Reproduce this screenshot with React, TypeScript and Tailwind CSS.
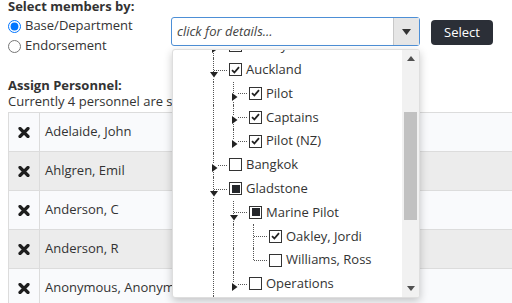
import React from 'react';

type Check = 'on' | 'off' | 'part';

interface TreeRow {
  label: string;
  guides: boolean[];
  last: boolean;
  toggle: 'open' | 'closed' | null;
  check: Check;
}

const treeRows: TreeRow[] = [
  { label: 'Albany', guides: [], last: false, toggle: 'closed', check: 'off' },
  { label: 'Auckland', guides: [], last: false, toggle: 'open', check: 'on' },
  { label: 'Pilot', guides: [true], last: false, toggle: 'closed', check: 'on' },
  { label: 'Captains', guides: [true], last: false, toggle: 'closed', check: 'on' },
  { label: 'Pilot (NZ)', guides: [true], last: true, toggle: 'closed', check: 'on' },
  { label: 'Bangkok', guides: [], last: false, toggle: 'closed', check: 'off' },
  { label: 'Gladstone', guides: [], last: false, toggle: 'open', check: 'part' },
  { label: 'Marine Pilot', guides: [true], last: false, toggle: 'open', check: 'part' },
  { label: 'Oakley, Jordi', guides: [true, true], last: false, toggle: null, check: 'on' },
  { label: 'Williams, Ross', guides: [true, true], last: true, toggle: null, check: 'off' },
  { label: 'Operations', guides: [true], last: true, toggle: 'closed', check: 'off' },
  { label: 'Rockhampton', guides: [], last: false, toggle: 'closed', check: 'off' },
];

const personnel = ['Adelaide, John', 'Ahlgren, Emil', 'Anderson, C', 'Anderson, R', 'Anonymous, Anonymous'];

const CheckBox = ({ state }: { state: Check }) => (
  <div className="ml-[5px] flex h-[13px] w-[13px] shrink-0 items-center justify-center border border-[#333] bg-white">
    {state === 'on' && (
      <svg width="9" height="8" viewBox="0 0 9 8">
        <path d="M1 4.2 L3.4 6.5 L8 1.2" fill="none" stroke="#222" strokeWidth="1.8" />
      </svg>
    )}
    {state === 'part' && <div className="h-[8px] w-[8px] bg-[#25272b]" />}
  </div>
);

const Arrow = ({ open }: { open: boolean }) =>
  open ? (
    <svg width="8" height="6" viewBox="0 0 8 6" className="absolute left-[6px] top-[14px] bg-white">
      <path d="M0 0 L8 0 L4 5.5 Z" fill="#222" />
    </svg>
  ) : (
    <svg width="6" height="8" viewBox="0 0 6 8" className="absolute left-[8px] top-[11px] bg-white">
      <path d="M0 0 L5.5 4 L0 8 Z" fill="#222" />
    </svg>
  );

const RemoveIcon = () => (
  <svg width="12" height="11" viewBox="0 0 12 11">
    <path d="M2 1.5 L10 9.5 M10 1.5 L2 9.5" stroke="#1e1e1e" strokeWidth="3.2" strokeLinecap="round" />
  </svg>
);

const Row = ({ row }: { row: TreeRow }) => (
  <div className="flex h-[23.8px] items-center">
    {row.guides.map((g, i) => (
      <div key={i} className="relative w-5 self-stretch">
        {g && <div className="absolute bottom-0 left-[9px] top-0 border-l border-dotted border-[#555]" />}
      </div>
    ))}
    <div className="relative w-5 self-stretch">
      <div
        className={
          row.last
            ? 'absolute left-[9px] top-0 h-1/2 border-l border-dotted border-[#555]'
            : 'absolute bottom-0 left-[9px] top-0 border-l border-dotted border-[#555]'
        }
      />
      <div className="absolute left-[10px] top-1/2 w-[13px] border-t border-dotted border-[#555]" />
      {row.toggle && <Arrow open={row.toggle === 'open'} />}
    </div>
    <CheckBox state={row.check} />
    <span className="ml-1 whitespace-nowrap text-[13px] text-[#333]">{row.label}</span>
  </div>
);

export default function App() {
  return (
    <div className="relative h-[303px] w-[512px] overflow-hidden bg-white font-['Open_Sans',sans-serif] text-[13px] text-[#333]">
      <div className="flex pl-2">
        {/* member selection mode */}
        <div className="w-[163px]">
          <div className="h-3 font-bold leading-[12px]">Select members by:</div>
          <div className="mt-1">
            <label className="flex h-5 items-center gap-1">
              <input type="radio" name="mode" defaultChecked className="h-[13px] w-[13px]" />
              <span>Base/Department</span>
            </label>
            <label className="flex h-5 items-center gap-1">
              <input type="radio" name="mode" className="h-[13px] w-[13px]" />
              <span>Endorsement</span>
            </label>
          </div>
        </div>

        {/* combo + button */}
        <div className="mt-[17px] flex h-[29px] w-[249px] rounded-[3px] border border-[#4d8fd6] bg-white">
          <div className="flex flex-1 items-center pl-[5px] italic text-[#444]">click for details...</div>
          <div className="flex w-[26px] items-center justify-center border-l border-[#c8c8c8] bg-[#e6e6e6]">
            <svg width="9" height="6" viewBox="0 0 9 6">
              <path d="M0 0 L9 0 L4.5 6 Z" fill="#333" />
            </svg>
          </div>
        </div>
        <button className="ml-[11px] mt-[20px] flex h-[25px] w-[62px] items-center justify-center rounded-[4px] bg-[#2b2f37] text-white">
          Select
        </button>
      </div>

      <div className="pl-2">
        <div className="mt-[21px] font-bold leading-4">Assign Personnel:</div>
        <div className="leading-4 whitespace-nowrap">Currently 4 personnel are selected.</div>
        <div className="mt-[3px] w-[530px] border-l border-t border-[#dcdcdc]">
          {personnel.map((name, i) => (
            <div
              key={name}
              className={`flex h-[39px] border-b border-[#dcdcdc] ${i % 2 === 0 ? 'bg-[#f9fafc]' : 'bg-[#ececec]'}`}
            >
              <div className="flex w-[31px] items-center justify-center border-r border-[#dcdcdc]">
                <RemoveIcon />
              </div>
              <div className="flex items-center pl-[5px]">{name}</div>
            </div>
          ))}
        </div>
      </div>

      {/* dropdown tree panel */}
      <div className="absolute left-[172px] top-[49px] flex h-[249px] w-[248px] overflow-hidden rounded-[3px] border border-[#dedede] bg-white shadow-[0_3px_8px_rgba(0,0,0,0.22)]">
        <div className="flex-1 overflow-hidden">
          <div className="-mt-[16px] pl-[31px]">
            {treeRows.map((r) => (
              <Row key={r.label} row={r} />
            ))}
          </div>
        </div>
        <div className="flex w-[17px] flex-col bg-[#f1f1f1]">
          <div className="flex h-[17px] items-center justify-center">
            <svg width="8" height="5" viewBox="0 0 8 5">
              <path d="M0 5 L8 5 L4 0 Z" fill="#505050" />
            </svg>
          </div>
          <div className="flex-1 px-[2px]">
            <div className="mt-[45px] h-[108px] bg-[#c1c1c1]" />
          </div>
          <div className="flex h-[17px] items-center justify-center">
            <svg width="8" height="5" viewBox="0 0 8 5">
              <path d="M0 0 L8 0 L4 5 Z" fill="#505050" />
            </svg>
          </div>
        </div>
      </div>
    </div>
  );
}
